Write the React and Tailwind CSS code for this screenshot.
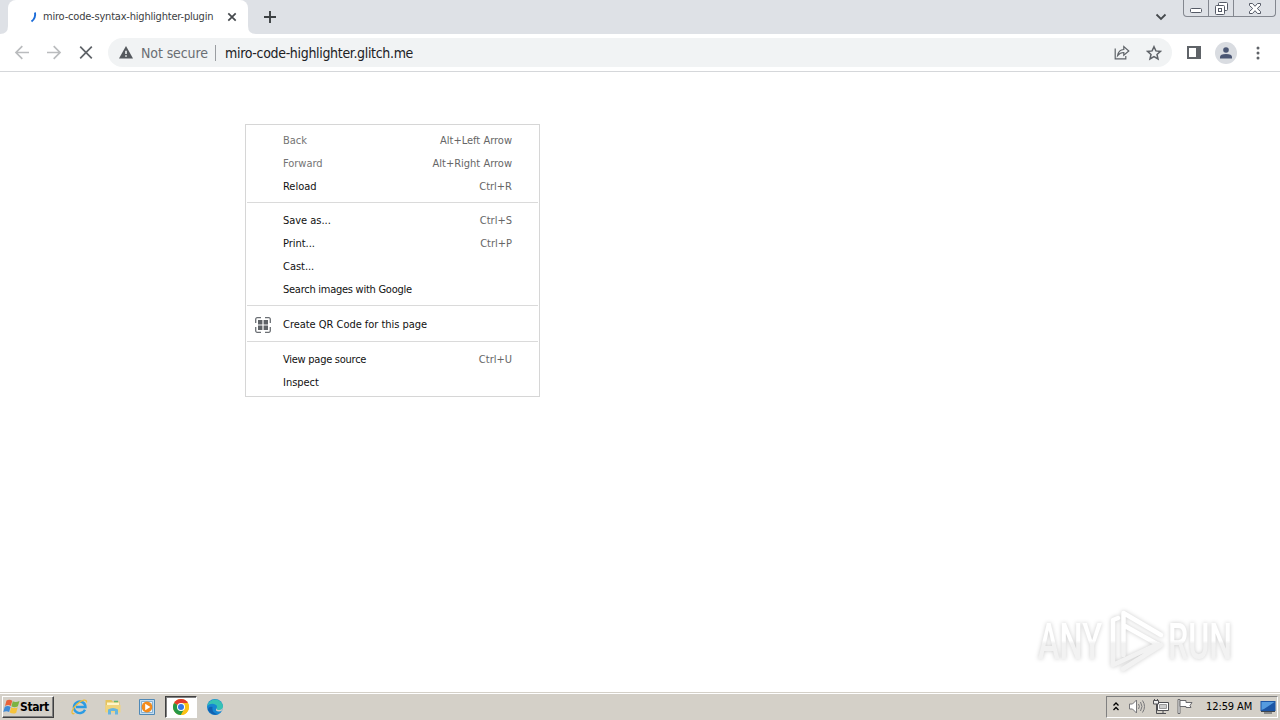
import React from 'react';

const menuGroups = [
  {
    items: [
      { label: 'Back', keys: 'Alt+Left Arrow', disabled: true },
      { label: 'Forward', keys: 'Alt+Right Arrow', disabled: true },
      { label: 'Reload', keys: 'Ctrl+R' },
    ],
  },
  {
    divider: 'mt-[3px] mb-[7px]',
    items: [
      { label: 'Save as...', keys: 'Ctrl+S' },
      { label: 'Print...', keys: 'Ctrl+P' },
      { label: 'Cast...' },
      { label: 'Search images with Google', tight: true },
    ],
  },
  {
    divider: 'mt-[3px] mb-[8px]',
    items: [{ label: 'Create QR Code for this page', icon: true }],
  },
  {
    divider: 'mt-[4px] mb-[7px]',
    items: [
      { label: 'View page source', keys: 'Ctrl+U', tight: true },
      { label: 'Inspect' },
    ],
  },
];

const QrIcon = () => (
  <svg className="mb-[2px]" width="16" height="16" viewBox="0 0 16 16" fill="none" stroke="#6b6f74" strokeWidth="1.3">
    <path d="M.7 6V2.2A1.5 1.5 0 0 1 2.2.7H6M10 .7h3.8a1.5 1.5 0 0 1 1.5 1.5V6M15.3 10v3.8a1.5 1.5 0 0 1-1.5 1.5H10M6 15.3H2.2a1.5 1.5 0 0 1-1.5-1.5V10" />
    <path d="M3 3h4.4v4.4H3zM8.600 3H13v4.400H8.600zM3 8.600h4.400V13H3zM8.600 8.600H13V13H8.600z" fill="#5f6368" stroke="none" />
  </svg>
);

const TabStrip = () => (
  <div className="flex h-[34px] items-start justify-between bg-[#dee1e6]">
    <div className="flex h-full items-end">
      <svg className="shrink-0" width="8" height="34"><path d="M0 34Q8 34 8 26V34z" fill="#fff" /></svg>
      <div className="flex h-full w-[240px] items-center rounded-t-lg bg-white pl-[21px]">
        <svg width="14" height="14" viewBox="0 0 14 14" className="shrink-0">
          <path d="M6 2.5Q7 8 2.5 11.5" fill="none" stroke="#1a6bd8" strokeWidth="1.9" />
        </svg>
        <span className="w-[176px] whitespace-nowrap pt-px text-[11px] tracking-[-0.2px] text-[#3c4043]">miro-code-syntax-highlighter-plugin</span>
        <svg width="10" height="10" viewBox="0 0 10 10" className="ml-[8px] shrink-0"><path d="M1.3 1.3l7.4 7.4M8.7 1.3L1.3 8.7" stroke="#45494d" strokeWidth="1.7" /></svg>
      </div>
      <svg className="shrink-0" width="8" height="34"><path d="M8 34Q0 34 0 26V34z" fill="#fff" /></svg>
      <svg className="mb-[11px] ml-[8px]" width="12" height="12" viewBox="0 0 12 12"><path d="M6 0v12M0 6h12" stroke="#3c4043" strokeWidth="1.9" /></svg>
    </div>
    <div className="flex">
      <svg className="mr-[16px] mt-[13px]" width="12" height="8" viewBox="0 0 12 8" fill="none"><path d="M1.5 1.5L6 6l4.5-4.5" stroke="#45494d" strokeWidth="1.8" /></svg>
      <div className="mr-[4px] flex h-[17px] w-[93px] rounded-b-[4px] border border-t-0 border-[#83878f]">
        <div className="flex w-[25px] items-center justify-center border-r border-[#83878f] pt-1">
          <svg width="12" height="5" viewBox="0 0 12 5"><rect x=".5" y=".5" width="11" height="4" rx="1" fill="#fff" stroke="#555a66" /></svg>
        </div>
        <div className="flex w-[25px] items-center justify-center border-r border-[#83878f]">
          <svg width="13" height="13" viewBox="0 0 13 13" fill="#fff" stroke="#555a66"><rect x="3.5" y=".5" width="9" height="8" rx="1" /><rect x=".5" y="3.5" width="9" height="9" rx="1" /><rect x="3.5" y="6.5" width="3" height="3" /></svg>
        </div>
        <div className="flex flex-1 items-center justify-center">
          <svg width="12" height="11" viewBox="0 0 12 11"><path d="M.5.5h3L6 3.3 8.5.5h3v2L8.3 5.5l3.2 3v2h-3L6 7.7 3.5 10.5h-3v-2l3.2-3L.5 2.5z" fill="#fff" stroke="#555a66" /></svg>
        </div>
      </div>
    </div>
  </div>
);

const Toolbar = () => (
  <div className="flex h-[38px] items-center border-b border-[#d5d7da] bg-white pl-[14px]">
    <svg className="shrink-0" width="16" height="16" viewBox="0 0 16 16" fill="none" stroke="#babcbe" strokeWidth="1.7"><path d="M15 7.5H2M8.3 1.2L2 7.5l6.3 6.3" /></svg>
    <svg className="ml-[16px] shrink-0" width="16" height="16" viewBox="0 0 16 16" fill="none" stroke="#babcbe" strokeWidth="1.7"><path d="M1 7.5h13M7.7 1.2L14 7.5l-6.3 6.3" /></svg>
    <svg className="ml-[17px] shrink-0" width="14" height="14" viewBox="0 0 14 14" stroke="#5f6368" strokeWidth="1.7"><path d="M1.2.7l11.6 11.6M12.8.7L1.2 12.3" /></svg>
    <div className="ml-[15px] flex h-[29px] w-[1064px] items-center rounded-full bg-[#f1f3f4] pl-[11px] pr-[10px]">
      <svg className="shrink-0" width="14" height="13" viewBox="0 0 14 13"><path d="M7 0l7 12.5H0z" fill="#55595e" /><path d="M6.2 4.8h1.6v3.2H6.2zM6.2 9.2h1.6v1.6H6.2z" fill="#f1f3f4" /></svg>
      <span className="ml-[8px] w-[74px] whitespace-nowrap pt-px text-[14px] tracking-[-0.1px] text-[#6a6e73]">Not secure</span>
      <div className="h-[16px] w-px bg-[#9a9da1]" />
      <span className="ml-[9px] flex-1 whitespace-nowrap pt-px text-[14px] tracking-[-0.32px] text-[#202124]">miro-code-highlighter.glitch.me</span>
      <svg width="16" height="15" viewBox="0 0 16 15" fill="none" stroke="#5f6368" strokeWidth="1.2"><path d="M1.2 3.5v10.3h10.6V11" /><path d="M3.6 10.6Q4.5 4.7 9.8 4.5V1.5L14.8 6l-5 4.3V7.5Q6 7.5 3.6 10.6z" /></svg>
      <svg className="ml-[16px]" width="16" height="16" viewBox="0 0 16 16" fill="none" stroke="#5f6368" strokeWidth="1.5"><path d="M8 1.7l1.9 4.2 4.6.5L11 9.5l1 4.5-4-2.4L4 14l1-4.5L1.5 6.4l4.6-.5z" /></svg>
    </div>
    <svg className="ml-[15px]" width="14" height="14" viewBox="0 0 14 14"><path d="M1 1h12v11H1z" fill="none" stroke="#5f6368" strokeWidth="2" /><path d="M9 1h4v11H9z" fill="#5f6368" /></svg>
    <div className="ml-[14px] flex h-[22px] w-[22px] items-center justify-center rounded-full bg-[#d9dce1]">
      <svg width="12" height="12" viewBox="0 0 12 12" fill="#4a5673"><circle cx="6" cy="3" r="2.8" /><path d="M0 11.5V10q0-3 6-3t6 3v1.5z" /></svg>
    </div>
    <svg className="ml-[19px]" width="4" height="14" viewBox="0 0 4 14" fill="#5f6368"><circle cx="2" cy="2" r="1.5" /><circle cx="2" cy="7" r="1.5" /><circle cx="2" cy="12" r="1.5" /></svg>
  </div>
);

const ContextMenu = () => (
  <div className="absolute left-[245px] top-[52px] h-[273px] w-[295px] border border-[#d6d6d6] bg-white px-px pt-[5px] text-[11px]">
    {menuGroups.map((group, i) => (
      <div key={i}>
        {group.divider && <div className={`h-px bg-[#dadada] ${group.divider}`} />}
        {group.items.map((item) => (
          <div key={item.label} className="flex h-[23px] items-center pr-[26px]">
            <div className="w-[36px] pl-[8px]">{item.icon && <QrIcon />}</div>
            <span className={`${item.disabled ? 'text-[#747474]' : 'text-[#111]'} ${item.tight ? 'tracking-[-0.26px]' : 'tracking-[-0.03px]'}`}>
              {item.label}
            </span>
            <span className="ml-auto text-[#666]">{item.keys}</span>
          </div>
        ))}
      </div>
    ))}
  </div>
);

const Watermark = () => (
  <svg className="absolute left-[1026px] top-[532px] overflow-visible drop-shadow-[0_0_2px_rgba(0,0,0,0.2)]" width="220" height="76" viewBox="-4 0 220 76" fill="none">
    <defs>
      <linearGradient id="fade" gradientUnits="userSpaceOnUse" x1="0" y1="0" x2="0" y2="76">
        <stop offset="0.48" stopColor="#fff" />
        <stop offset="0.52" stopColor="#f2f2f2" />
      </linearGradient>
    </defs>
    <g fill="url(#fade)" fontFamily="Roboto" fontSize="50" fontWeight="500">
      <text x="8" y="55" textLength="64" lengthAdjust="spacingAndGlyphs">ANY</text>
      <text x="138" y="55" textLength="64" lengthAdjust="spacingAndGlyphs">RUN</text>
    </g>
    <g stroke="url(#fade)" strokeWidth="4.5" strokeLinejoin="round" strokeLinecap="round">
      <path d="M93.5 51V9L131 31M95 22l32 18" />
      <path d="M88 14l-5 2v45L128 40M93 65l38-24" />
    </g>
  </svg>
);

const StartFlag = () => (
  <svg width="17" height="16" viewBox="0 0 16 16">
    <path d="M3 1.500Q6-.3 8.800 1.800L7.300 7Q5 5.200 1.500 7z" fill="#e8623a" />
    <path d="M9.300 2.300Q12 4 16 2L14.400 7.300Q11 9 7.900 7.300z" fill="#7cb342" />
    <path d="M1.300 7.700Q4.500 6 7.100 7.900L5.600 13Q3 11.300-.2 13z" fill="#3f8ad6" />
    <path d="M7.700 8.200Q11 10 14.200 8.200L12.700 13.700Q10 15.500 6.200 13.500z" fill="#f6c33b" />
  </svg>
);

const ChromeLogo = () => (
  <svg width="16" height="16" viewBox="0 0 16 16">
    <circle cx="8" cy="8" r="8" fill="#fbc116" />
    <path d="M8 8L1.07 4A8 8 0 0 1 14.93 4z" fill="#e33b2e" />
    <path d="M8 8L1.07 4A8 8 0 0 0 8 16l3.2-6z" fill="#279847" />
    <path d="M8 4h6.93A8 8 0 0 1 8 16l3.4-6z" fill="#fbc116" />
    <circle cx="8" cy="8" r="4" fill="#fff" />
    <circle cx="8" cy="8" r="3" fill="#3577e5" />
  </svg>
);

const Taskbar = () => (
  <div className="flex h-[28px] shrink-0 flex-col bg-[#d4d0c8] text-[11px] text-black">
    <div className="mt-px h-px bg-white" />
    <div className="flex flex-1 items-center pb-px pl-[2px] pr-[2px]">
      <div className="mt-px flex h-[22px] w-[52px] items-center border border-white border-r-[#404040] border-b-[#404040] shadow-[inset_-1px_-1px_0_#808080]">
        <StartFlag />
        <span className="text-[12px] font-bold leading-none tracking-[-0.4px]">Start</span>
      </div>
      <svg className="ml-[17px]" width="17" height="16" viewBox="0 0 17 16" fill="none">
        <path d="M14 10.700A5.800 5.800 0 1 1 14.500 8H5" stroke="#2b9be3" strokeWidth="2.4" />
        <path d="M3.500 14.500C-1 16 1 9.500 6 5.200S16-.5 15.500 3.500" stroke="#edbd3b" strokeWidth="1.3" />
      </svg>
      <svg className="ml-[17px]" width="16" height="16" viewBox="0 0 16 16">
        <path d="M.5 1h6l1 1.500h7V13H.5z" fill="#e6c35c" />
        <path d="M2 3.500h12v7H2z" fill="#fff5c8" />
        <path d="M.5 6h15v7.500H.5z" fill="#f0d47c" />
        <path d="M3 15.500v-5q5-3 10 0v5h-3V12H6v3.500z" fill="#67b5df" />
        <path d="M9 2.500h4" stroke="#63b66c" strokeWidth="1.5" />
      </svg>
      <svg className="ml-[18px]" width="16" height="16" viewBox="0 0 16 16">
        <path d="M.5.5h15v15H.5z" fill="#c5ddf0" stroke="#4f89b7" />
        <path d="M2.5 2.5h11v11h-11z" fill="#e8f3fb" stroke="#85b1d3" />
        <circle cx="8" cy="8" r="5.4" fill="#f38b1c" />
        <path d="M6.200 4.700l5.200 3.300-5.200 3.300z" fill="#fff" />
      </svg>
      <div className="ml-[10px] mt-px flex h-[22px] w-[32px] items-center justify-center border border-[#404040] border-r-white border-b-white bg-white shadow-[inset_1px_1px_0_#808080]">
        <ChromeLogo />
      </div>
      <svg className="ml-[10px]" width="16" height="16" viewBox="0 0 16 16">
        <circle cx="8" cy="8" r="8" fill="#1686d2" />
        <path d="M.2 7A8 8 0 0 1 16 7.5Q16 11 12 11q-3 0-2.300-1.800Q11 6 7 5 3 4.200.2 7z" fill="#36c2b5" />
        <path d="M5.500 8Q4.500 14 11 15.300A8 8 0 0 1 1 11Q1.500 7 5.500 8z" fill="#1261b1" />
        <path d="M9.700 9Q7.500 12.500 12 12.500q2 0 3.300-1.200Q16 10 16 8q-.8 3-4 3-2.700 0-2.300-2z" fill="#d4d0c8" />
      </svg>
      <div className="ml-auto flex h-[22px] w-[172px] items-center border border-[#808080] border-r-white border-b-white pl-[6px]">
        <svg width="6" height="9" viewBox="0 0 6 9" fill="none" stroke="#000" strokeWidth="1.3"><path d="M.5 3.500L3 1l2.500 2.500M.5 8L3 5.500 5.500 8" /></svg>
        <svg className="ml-[10px]" width="16" height="15" viewBox="0 0 16 15" fill="none" stroke="#77777a"><path d="M.5 5h3l4-4v13l-4-4h-3z" fill="#fff" /><path d="M9.500 5q1.800 2.500 0 5M11.500 3q3 4.500 0 9M13.500 1.500q4 6 0 12" /></svg>
        <svg className="ml-[8px]" width="16" height="15" viewBox="0 0 16 15" stroke="#4e4e52"><path d="M4.500 3.500h11v8h-11z" fill="#fff" /><path d="M6.500 5.500h7v4h-7z" fill="#ccc" stroke="#999" /><path d="M3.500 5v9.500h9.500M10 12v2" fill="none" /><path d="M1.500 0v2M4.500 0v2M.5 1.500h5v3.500h-5z" fill="#eee" /></svg>
        <svg className="ml-[8px]" width="16" height="15" viewBox="0 0 16 15" stroke="#6a6a6d"><path d="M1 .5h2v14H1z" fill="#fff" /><path d="M3 1.500h6v2h6l-2 3 1 2H9v-1H3z" fill="#fff" /></svg>
        <span className="ml-[13px] w-[54px] whitespace-nowrap pt-px tracking-[-0.1px]">12:59 AM</span>
        <svg width="16" height="14" viewBox="0 0 16 14"><path d="M.5 1h15v10H.5z" fill="#1c55a5" /><path d="M1.500 2h13L4 9l-2.500 1z" fill="#559bdf" /><path d="M1 11.500h14M4 13h8" stroke="#40474f" /></svg>
      </div>
    </div>
  </div>
);

export default function App() {
  return (
    <div className="flex h-screen w-full flex-col overflow-hidden bg-white font-['DejaVu_Sans_Condensed','DejaVu_Sans',sans-serif]">
      <TabStrip />
      <Toolbar />
      <main className="relative flex-1">
        <ContextMenu />
        <Watermark />
      </main>
      <Taskbar />
    </div>
  );
}
